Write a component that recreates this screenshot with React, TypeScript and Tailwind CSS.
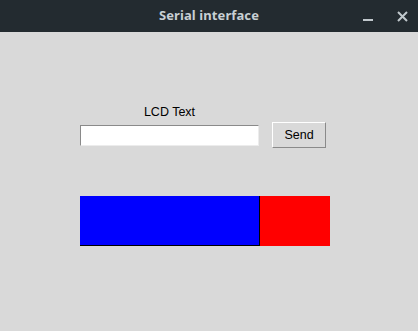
export default function App() {
  return (
    <div className="flex h-[331px] w-[418px] flex-col bg-[#d9d9d9] font-['Liberation_Sans',Arial,sans-serif]">
      {/* window title bar */}
      <div className="relative flex h-[32px] shrink-0 items-center justify-center bg-[#232b30]">
        <span className="font-['Noto_Sans',sans-serif] text-[13px] font-bold tracking-[0.1px] text-[#c8d0d4]">
          Serial interface
        </span>
        <div className="absolute right-[10px] top-0 flex h-[32px] items-center gap-[24px]">
          <div className="mt-[8px] h-[2px] w-[10px] bg-[#c0c8cc]" />
          <svg width="11" height="11" viewBox="0 0 11 11">
            <path d="M1 1 L10 10 M10 1 L1 10" stroke="#c0c8cc" strokeWidth="2" />
          </svg>
        </div>
      </div>

      <div className="flex flex-col pl-[80px] pt-[72px]">
        <div className="w-[179px] text-center text-[12.5px] leading-[17px] text-black">LCD Text</div>
        <div className="mt-[1px] flex items-center gap-[13px]">
          <input
            className="h-[21px] w-[179px] border border-b-[#ececec] border-l-[#8a8a8a] border-r-[#ececec] border-t-[#8a8a8a] bg-white outline-none"
            defaultValue=""
          />
          <button className="h-[26px] w-[54px] border border-b-[#8a8a8a] border-l-white border-r-[#8a8a8a] border-t-white bg-[#d9d9d9] text-[12.5px] text-black">
            Send
          </button>
        </div>

        <div className="mt-[48px] flex h-[50px]">
          <div className="w-[180px] border-b border-r border-black bg-[#0000ff]" />
          <div className="w-[70px] bg-[#ff0000]" />
        </div>
      </div>
    </div>
  );
}
